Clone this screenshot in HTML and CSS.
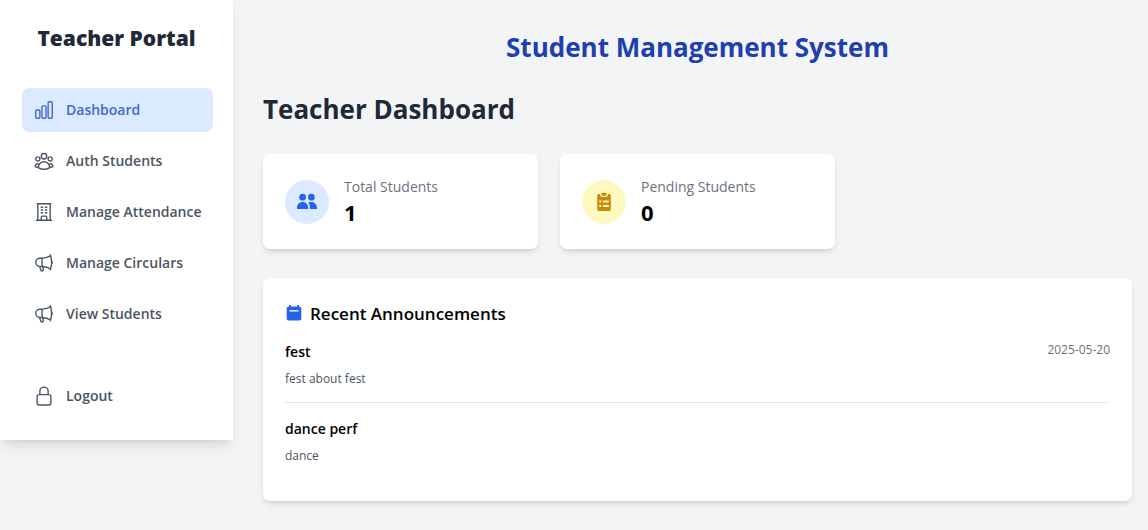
FILE: index.html
```html
<!DOCTYPE html>
<html lang="en">
<head>
<meta charset="utf-8">
<meta name="viewport" content="width=device-width, initial-scale=1">
<title>Teacher Portal</title>
<link rel="stylesheet" href="styles.css">
</head>
<body>
<div class="layout">
  <aside class="sidebar">
    <h2 class="brand">Teacher Portal</h2>
    <nav class="nav" aria-label="Main">
      <a class="nav-item active" href="#dashboard" aria-current="page">
        <svg class="nav-icon" viewBox="0 0 24 24" aria-hidden="true"><path d="M3 13.125C3 12.504 3.504 12 4.125 12h2.25c.621 0 1.125.504 1.125 1.125v6.75C7.5 20.496 6.996 21 6.375 21h-2.25A1.125 1.125 0 0 1 3 19.875v-6.75ZM9.75 8.625c0-.621.504-1.125 1.125-1.125h2.25c.621 0 1.125.504 1.125 1.125v11.25c0 .621-.504 1.125-1.125 1.125h-2.25a1.125 1.125 0 0 1-1.125-1.125V8.625ZM16.5 4.125c0-.621.504-1.125 1.125-1.125h2.25C20.496 3 21 3.504 21 4.125v15.75c0 .621-.504 1.125-1.125 1.125h-2.25a1.125 1.125 0 0 1-1.125-1.125V4.125Z"/></svg>
        <span>Dashboard</span>
      </a>
      <a class="nav-item" href="#auth">
        <svg class="nav-icon" viewBox="0 0 24 24" aria-hidden="true"><path d="M18 18.72a9.094 9.094 0 0 0 3.741-.479 3 3 0 0 0-4.682-2.72m.94 3.198.001.031c0 .225-.012.447-.037.666A11.944 11.944 0 0 1 12 21c-2.17 0-4.207-.576-5.963-1.584A6.062 6.062 0 0 1 6 18.719m12 0a5.971 5.971 0 0 0-.941-3.197m0 0A5.995 5.995 0 0 0 12 12.75a5.995 5.995 0 0 0-5.058 2.772m0 0a3 3 0 0 0-4.681 2.72 8.986 8.986 0 0 0 3.74.477m.94-3.197a5.971 5.971 0 0 0-.94 3.197M15 6.75a3 3 0 1 1-6 0 3 3 0 0 1 6 0Zm6 3a2.25 2.25 0 1 1-4.5 0 2.25 2.25 0 0 1 4.5 0Zm-13.5 0a2.25 2.25 0 1 1-4.5 0 2.25 2.25 0 0 1 4.5 0Z"/></svg>
        <span>Auth Students</span>
      </a>
      <a class="nav-item" href="#attendance">
        <svg class="nav-icon" viewBox="0 0 24 24" aria-hidden="true"><path d="M3.75 21h16.5M4.5 3h15M5.25 3v18m13.5-18v18M9 6.75h1.5m-1.5 3h1.5m-1.5 3h1.5m3-6H15m-1.5 3H15m-1.5 3H15M9 21v-3.375c0-.621.504-1.125 1.125-1.125h3.75c.621 0 1.125.504 1.125 1.125V21"/></svg>
        <span>Manage Attendance</span>
      </a>
      <a class="nav-item" href="#circulars">
        <svg class="nav-icon" viewBox="0 0 24 24" aria-hidden="true"><path d="M10.34 15.84c-.688-.06-1.386-.09-2.09-.09H7.5a4.5 4.5 0 1 1 0-9h.75c.704 0 1.402-.03 2.09-.09m0 9.18c.253.962.584 1.892.985 2.783.247.55.06 1.21-.463 1.511l-.657.38c-.551.318-1.26.117-1.527-.461a20.845 20.845 0 0 1-1.44-4.282m3.102.069a18.03 18.03 0 0 1-.59-4.59c0-1.586.205-3.124.59-4.59m0 9.18a23.848 23.848 0 0 1 8.835 2.535M10.34 6.66a23.847 23.847 0 0 0 8.835-2.535m0 0A23.74 23.74 0 0 0 18.795 3m.38 1.125a23.91 23.91 0 0 1 1.014 5.395m-1.014 8.855c-.118.38-.245.754-.38 1.125m.38-1.125a23.91 23.91 0 0 0 1.014-5.395m0-3.46c.495.413.811 1.035.811 1.73 0 .695-.316 1.317-.811 1.73m0-3.46a24.347 24.347 0 0 1 0 3.46"/></svg>
        <span>Manage Circulars</span>
      </a>
      <a class="nav-item" href="#students">
        <svg class="nav-icon" viewBox="0 0 24 24" aria-hidden="true"><path d="M10.34 15.84c-.688-.06-1.386-.09-2.09-.09H7.5a4.5 4.5 0 1 1 0-9h.75c.704 0 1.402-.03 2.09-.09m0 9.18c.253.962.584 1.892.985 2.783.247.55.06 1.21-.463 1.511l-.657.38c-.551.318-1.26.117-1.527-.461a20.845 20.845 0 0 1-1.44-4.282m3.102.069a18.03 18.03 0 0 1-.59-4.59c0-1.586.205-3.124.59-4.59m0 9.18a23.848 23.848 0 0 1 8.835 2.535M10.34 6.66a23.847 23.847 0 0 0 8.835-2.535m0 0A23.74 23.74 0 0 0 18.795 3m.38 1.125a23.91 23.91 0 0 1 1.014 5.395m-1.014 8.855c-.118.38-.245.754-.38 1.125m.38-1.125a23.91 23.91 0 0 0 1.014-5.395m0-3.46c.495.413.811 1.035.811 1.73 0 .695-.316 1.317-.811 1.73m0-3.46a24.347 24.347 0 0 1 0 3.46"/></svg>
        <span>View Students</span>
      </a>
    </nav>
    <button class="nav-item" type="button">
      <svg class="nav-icon" viewBox="0 0 24 24" aria-hidden="true"><path d="M16.5 10.5V6.75a4.5 4.5 0 1 0-9 0v3.75m-.75 11.25h10.5a2.25 2.25 0 0 0 2.25-2.25v-6.75a2.25 2.25 0 0 0-2.25-2.25H6.75a2.25 2.25 0 0 0-2.25 2.25v6.75a2.25 2.25 0 0 0 2.25 2.25Z"/></svg>
      <span>Logout</span>
    </button>
  </aside>

  <main class="main">
    <h1 class="system-title">Student Management System</h1>
    <h2 class="page-title">Teacher Dashboard</h2>
    <section class="stats">
      <div class="card stat">
        <div class="badge badge-blue">
          <svg class="stat-icon" viewBox="0 0 22 22" fill="currentColor" aria-hidden="true"><circle cx="6.6" cy="6.2" r="3.4"/><circle cx="15.4" cy="6.2" r="3.4"/><path d="M1 18v-1c0-3.500 2.300-6 5.600-6s5.600 2.500 5.600 6v1zM12.200 11.400c1-.3 2-.4 3-.4 3.500 0 5.800 2.500 5.800 6v1h-7.100v-1.200c0-2.200-.5-4-1.700-5.400z"/></svg>
        </div>
        <div>
          <p class="stat-label">Total Students</p>
          <p class="stat-value">1</p>
        </div>
      </div>
      <div class="card stat">
        <div class="badge badge-yellow">
          <svg class="stat-icon" viewBox="0 0 22 22" fill="currentColor" aria-hidden="true"><path fill-rule="evenodd" d="M6 3h1c0 2 1 3 2.500 3h3C14 6 15 5 15 3h1c1 0 1.800.8 1.800 1.800v13.400c0 1-.8 1.800-1.800 1.800H6c-1 0-1.800-.8-1.800-1.800V4.800C4.200 3.800 5 3 6 3zM6.300 9.500v2h2v-2zM10 9.500v2h5.800v-2zM6.300 14v2h2v-2zM10 14v2h5.800v-2z"/><rect x="8.500" y="1.800" width="5" height="3" rx="1"/></svg>
        </div>
        <div>
          <p class="stat-label">Pending Students</p>
          <p class="stat-value">0</p>
        </div>
      </div>
    </section>

    <section class="card announcements">
      <h3 class="section-title">
        <svg class="section-icon" viewBox="0 0 18 18" aria-hidden="true"><path fill="currentColor" d="M4 0h1.800v1.500h6.400V0H14v1.500c1.400 0 2.300.8 2.300 2v10c0 1.200-.8 2-2 2H3.700c-1.200 0-2-.8-2-2v-10c0-1.200.9-2 2.300-2z"/><path fill="#dbeafe" d="M4.500 5h9v1.600h-9z"/></svg>
        Recent Announcements
      </h3>
      <ul class="list">
        <li class="entry">
          <div>
            <h4 class="entry-title">fest</h4>
            <p class="entry-text">fest about fest</p>
          </div>
          <time class="entry-date" datetime="2025-05-20">2025-05-20</time>
        </li>
        <li class="entry">
          <div>
            <h4 class="entry-title">dance perf</h4>
            <p class="entry-text">dance</p>
          </div>
        </li>
      </ul>
    </section>
  </main>
</div>
</body>
</html>
```
FILE: styles.css
```css
* {
  box-sizing: border-box;
}

body,
h1,
h2,
h3,
h4,
p,
ul {
  margin: 0;
  padding: 0;
}

body {
  min-height: 100vh;
  background: #f3f4f6;
  color: #000;
  font-family: "Open Sans", "Noto Sans", sans-serif;
  font-size: 14px;
  line-height: 22px;
}

.layout {
  display: flex;
  align-items: flex-start;
}

.sidebar {
  flex: none;
  width: 233px;
  padding: 22px;
  background: #fff;
  box-shadow: 0 9px 14px -3px rgb(0 0 0 / 10%), 0 4px 6px -4px rgb(0 0 0 / 10%);
}

.brand {
  margin-bottom: 34px;
  color: #1f2937;
  font-size: 21px;
  font-weight: 800;
  line-height: 32px;
  text-align: center;
}

.nav {
  display: grid;
  gap: 7px;
  margin-bottom: 38px;
}

.nav-item {
  display: flex;
  align-items: center;
  gap: 11px;
  width: 100%;
  padding: 11px;
  border: 0;
  border-radius: 7px;
  background: none;
  color: #4b5563;
  font-family: inherit;
  font-size: 14px;
  font-weight: 600;
  line-height: 22px;
  text-align: left;
  text-decoration: none;
  white-space: nowrap;
  cursor: pointer;
}

.nav-item.active {
  background: #dbeafe;
  color: #4169d0;
}

.nav-icon {
  flex: none;
  width: 22px;
  height: 22px;
  fill: none;
  stroke: currentColor;
  stroke-width: 1.5;
  stroke-linecap: round;
  stroke-linejoin: round;
}

.main {
  flex: 1;
  min-width: 0;
  padding: 30px 16px 28px 30px;
}

.system-title {
  margin-bottom: 28px;
  color: #1e40af;
  font-size: 26px;
  font-weight: 700;
  line-height: 34px;
  text-align: center;
}

.page-title {
  margin-bottom: 28px;
  color: #1f2937;
  font-size: 26px;
  font-weight: 700;
  line-height: 34px;
}

.card {
  border-radius: 7px;
  background: #fff;
  box-shadow: 0 4px 6px -1px rgb(0 0 0 / 10%), 0 2px 4px -2px rgb(0 0 0 / 10%);
}

.stats {
  display: grid;
  grid-template-columns: repeat(3, 1fr);
  gap: 22px;
  margin-bottom: 29px;
}

.stat {
  display: flex;
  align-items: center;
  gap: 15px;
  padding: 22px;
}

.badge {
  display: flex;
  flex: none;
  padding: 11px;
  border-radius: 50%;
}

.badge-blue {
  background: #dbeafe;
  color: #2563eb;
}

.badge-yellow {
  background: #fef9c3;
  color: #ca8a04;
}

.stat-icon {
  width: 22px;
  height: 22px;
}

.stat-label {
  color: #6b7280;
}

.stat-value {
  font-size: 22px;
  font-weight: 700;
  line-height: 29px;
}

.announcements {
  padding: 22px;
}

.section-title {
  display: flex;
  align-items: center;
  gap: 7px;
  margin-bottom: 13px;
  font-size: 17px;
  font-weight: 600;
  line-height: 28px;
}

.section-icon {
  width: 18px;
  height: 18px;
  color: #2563eb;
}

.list {
  list-style: none;
}

.entry {
  display: flex;
  justify-content: space-between;
  align-items: flex-start;
  padding-bottom: 13px;
}

.entry + .entry {
  padding-top: 15px;
  border-top: 1px solid #e5e7eb;
}

.entry-title {
  margin-bottom: 6px;
  font-size: 14px;
  font-weight: 600;
  line-height: 22px;
}

.entry-text {
  color: #4b5563;
  font-size: 12px;
  line-height: 20px;
}

.entry-date {
  color: #6b7280;
  font-size: 12px;
  line-height: 18px;
}
```
